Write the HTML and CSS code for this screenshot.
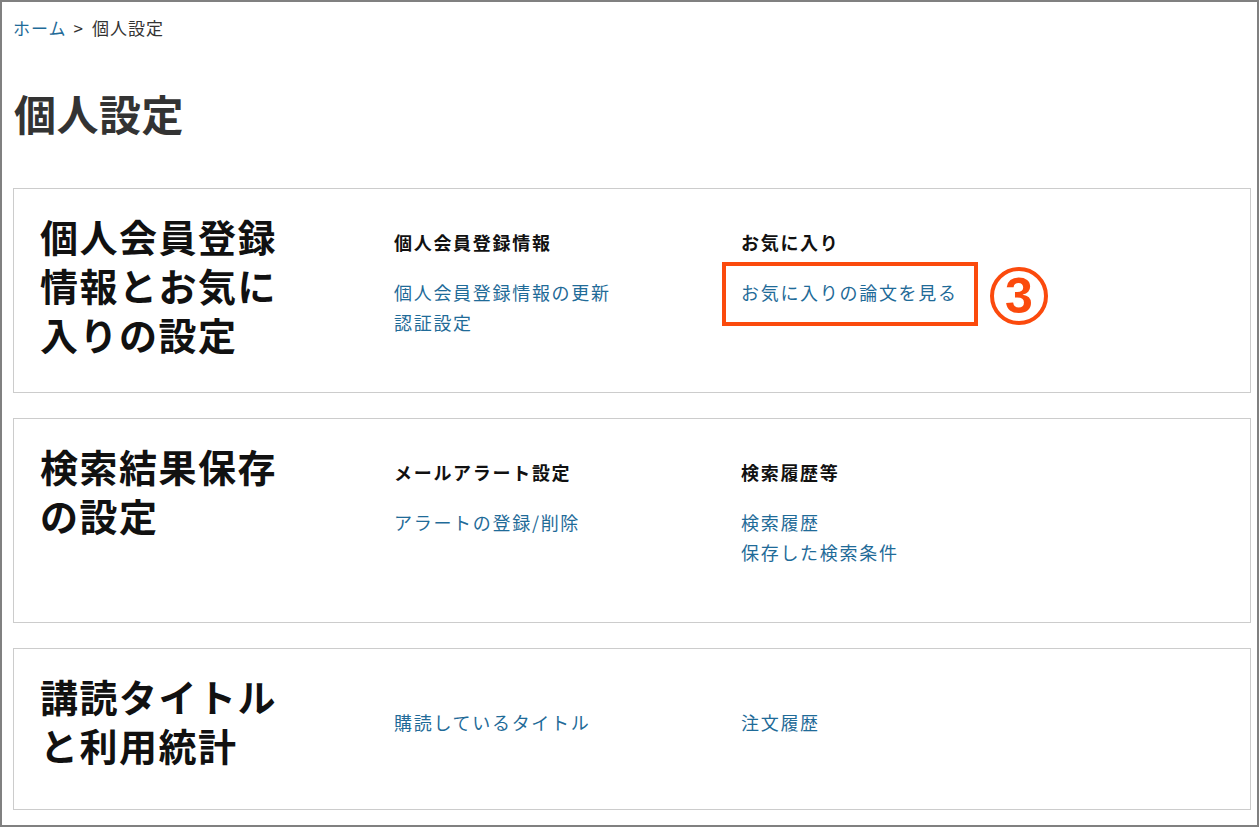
FILE: index.html
```html
<!DOCTYPE html>
<html lang="ja">
<head>
<meta charset="utf-8">
<title>個人設定</title>
<link rel="stylesheet" href="styles.css">
</head>
<body>
<div class="frame">
  <nav class="breadcrumb"><a href="#" class="link">ホーム</a><span class="sep">&gt;</span>個人設定</nav>
  <h1 class="page-title">個人設定</h1>

  <section class="card">
    <h2 class="card-title">個人会員登録情報とお気に入りの設定</h2>
    <div class="col">
      <h3 class="col-title">個人会員登録情報</h3>
      <ul class="links">
        <li><a href="#" class="link">個人会員登録情報の更新</a></li>
        <li><a href="#" class="link">認証設定</a></li>
      </ul>
    </div>
    <div class="col">
      <h3 class="col-title">お気に入り</h3>
      <ul class="links">
        <li class="marked"><a href="#" class="link">お気に入りの論文を見る</a><span class="mark-box"></span><span class="mark-num">3</span></li>
      </ul>
    </div>
  </section>

  <section class="card">
    <h2 class="card-title">検索結果保存の設定</h2>
    <div class="col">
      <h3 class="col-title">メールアラート設定</h3>
      <ul class="links">
        <li><a href="#" class="link">アラートの登録/削除</a></li>
      </ul>
    </div>
    <div class="col">
      <h3 class="col-title">検索履歴等</h3>
      <ul class="links">
        <li><a href="#" class="link">検索履歴</a></li>
        <li><a href="#" class="link">保存した検索条件</a></li>
      </ul>
    </div>
  </section>

  <section class="card card-compact">
    <h2 class="card-title">講読タイトルと利用統計</h2>
    <div class="col">
      <ul class="links links-only">
        <li><a href="#" class="link">購読しているタイトル</a></li>
      </ul>
    </div>
    <div class="col">
      <ul class="links links-only">
        <li><a href="#" class="link">注文履歴</a></li>
      </ul>
    </div>
  </section>
</div>
</body>
</html>
```

FILE: styles.css
```css
* { box-sizing: border-box; }

html, body {
  margin: 0;
  padding: 0;
  background: #fff;
}

body {
  font-family: "Noto Sans CJK JP", "Noto Sans", sans-serif;
  color: #222;
}

.frame {
  width: 1259px;
  height: 827px;
  border: 2px solid #808080;
  padding: 14px 6px 0 11px;
  overflow: hidden;
}

.link {
  color: #1f6b98;
  text-decoration: none;
}

.breadcrumb {
  font-size: 17px;
  line-height: 24px;
  letter-spacing: 1px;
  color: #333;
}

.sep {
  margin: 0 8px 0 7px;
}

.page-title {
  margin: 45px 0 47px 1px;
  font-size: 42px;
  line-height: 56px;
  letter-spacing: 0.5px;
  font-weight: 700;
  color: #333;
}

.card {
  display: flex;
  align-items: flex-start;
  min-height: 205px;
  border: 1px solid #cccccc;
  padding: 22px 0 0 26px;
  margin-bottom: 25px;
}

.card-compact {
  min-height: 162px;
}

.card-title {
  flex: 0 0 354px;
  margin: 0;
  padding-right: 100px;
  font-size: 38px;
  line-height: 49px;
  letter-spacing: 1.5px;
  font-weight: 700;
  color: #111;
}

.col {
  flex: 0 0 347px;
}

.col-title {
  margin: 19px 0 23px;
  font-size: 18px;
  line-height: 24px;
  letter-spacing: 1.7px;
  font-weight: 700;
  color: #111;
}

.links {
  list-style: none;
  margin: 0;
  padding: 0;
  font-size: 18px;
  line-height: 30px;
  letter-spacing: 1.7px;
}

.links-only {
  margin-top: 36px;
}

.marked {
  position: relative;
}

.mark-box {
  position: absolute;
  left: -19px;
  top: -15px;
  width: 256px;
  height: 64px;
  border: 4px solid #fb4a0d;
}

.mark-num {
  position: absolute;
  left: 249px;
  top: -10px;
  width: 58px;
  height: 58px;
  border: 4px solid #fb4a0d;
  border-radius: 50%;
  display: flex;
  align-items: center;
  justify-content: center;
  font-family: "Liberation Sans", Arial, sans-serif;
  font-weight: 700;
  font-size: 50px;
  line-height: 1;
  letter-spacing: 0;
  color: #fb4a0d;
}
```
